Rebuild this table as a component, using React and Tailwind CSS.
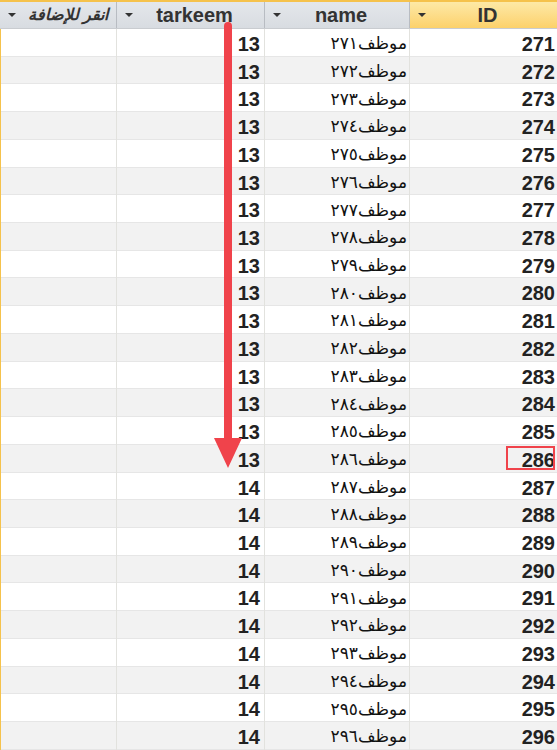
import React from 'react'

const toArabic = (n) => String(n).replace(/\d/g, (d) => '٠١٢٣٤٥٦٧٨٩'[d])

const rows = Array.from({ length: 26 }, (_, i) => ({
  id: 271 + i,
  name: 'موظف' + toArabic(271 + i),
  tarkeem: i < 16 ? 13 : 14,
}))

function Caret() {
  return <span className="inline-block w-0 h-0 border-l-[4px] border-r-[4px] border-t-[4px] border-l-transparent border-r-transparent border-t-[#333]" />
}

function HeadCell({ label, selected, italic, last }) {
  return (
    <div
      className={
        'flex items-center h-[26px] pl-2 pr-2 ' +
        (last ? '' : 'border-r border-[#b8bcc2] ') +
        (selected
          ? 'bg-gradient-to-b from-[#fde9a6] to-[#fcd16a]'
          : 'bg-gradient-to-b from-[#e4e7eb] to-[#d8dce1]')
      }
    >
      <Caret />
      <span
        className={
          'flex-1 text-[#333] ' +
          (italic ? 'italic font-bold text-[16px] text-right pr-0' : 'text-center font-bold text-[20px]')
        }
      >
        {label}
      </span>
    </div>
  )
}

export default function App() {
  return (
    <div className="relative w-[557px] h-[750px] overflow-hidden bg-white" style={{ fontFamily: '"Liberation Sans", "DejaVu Sans", Arial, sans-serif' }}>
      <div className="h-[2px] bg-[#f5c24c]" />
      <div className="grid grid-cols-[117px_148px_145px_147px] border-b border-[#c9ccd0]">
        <HeadCell label="انقر للإضافة" italic />
        <HeadCell label="tarkeem" />
        <HeadCell label="name" />
        <HeadCell label="ID" selected last />
      </div>

      <div className="border-l border-[#f5c24c]">
        {rows.map((r, i) => (
          <div
            key={r.id}
            className={
              'grid grid-cols-[116px_148px_145px_147px] h-[27.72px] border-b border-[#e6e6e6] ' +
              (i % 2 ? 'bg-[#f2f2f2]' : 'bg-white')
            }
          >
            <div className="border-r border-[#e2e2de]" />
            <div className="border-r border-[#e2e2de] flex items-center justify-end pr-[4px] font-bold text-[20px] text-[#222]">
              {r.tarkeem}
            </div>
            <div className="border-r border-[#e2e2de] flex items-center justify-end pr-[2px] text-[17px] text-[#111]">
              <span dir="rtl">{r.name}</span>
            </div>
            <div className="flex items-center justify-end pr-[2px] font-bold text-[20px] text-[#222]">
              {r.id}
            </div>
          </div>
        ))}
      </div>

      {/* red arrow */}
      <svg className="absolute left-[210px] top-[20px]" width="40" height="452" viewBox="0 0 40 452">
        <line x1="18" y1="6" x2="18" y2="420" stroke="#f0434b" strokeWidth="8" strokeLinecap="round" />
        <polygon points="4,418 32,418 18,448" fill="#f0434b" />
      </svg>

      {/* highlight box */}
      <div className="absolute left-[506px] top-[446px] w-[49px] h-[24px] border-2 border-[#f0434b]" />
    </div>
  )
}
